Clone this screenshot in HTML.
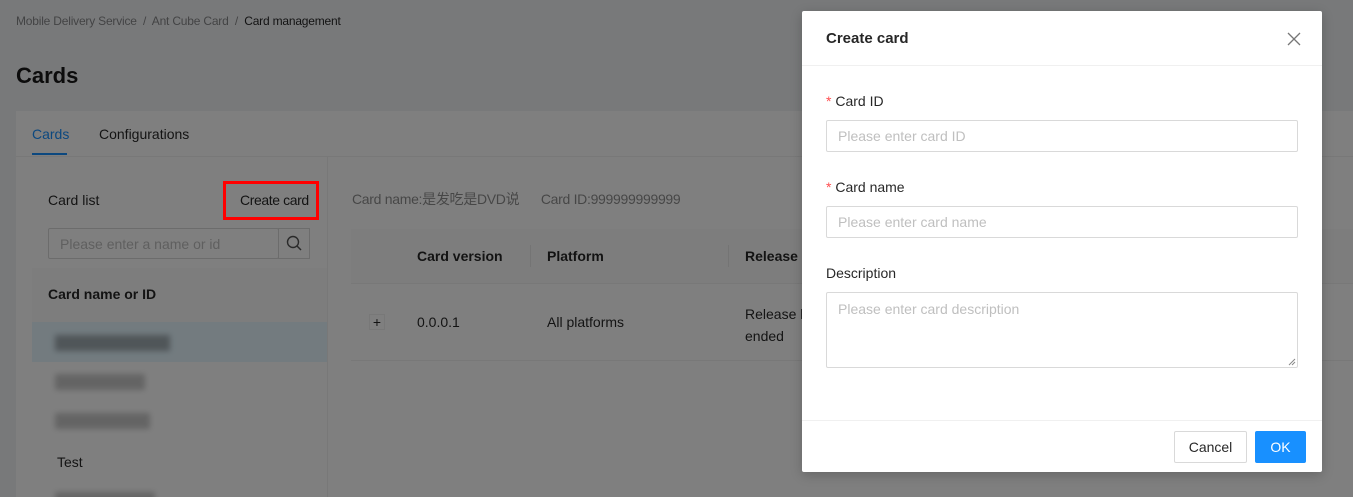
<!DOCTYPE html>
<html><head><meta charset="utf-8"><style>
*{box-sizing:border-box;margin:0;padding:0}
html,body{width:1353px;height:497px;overflow:hidden}
body{background:#f0f2f5;font-family:"Liberation Sans","Noto Sans CJK SC",sans-serif;font-size:14px;color:rgba(0,0,0,.85);position:relative}
.a{position:absolute}
.mask{position:absolute;left:0;top:0;width:1353px;height:497px;background:rgba(0,0,0,.5)}
.inp{position:absolute;border:1px solid #d9d9d9;border-radius:2px;background:#fff;color:#bfbfbf;padding:0 11px;line-height:30px;font-size:14px}
.blur{position:absolute;height:16px;background:rgba(0,0,0,.3);filter:blur(3px)}
</style></head><body>
<div class="a" style="left:16px;top:14px;font-size:12px;color:rgba(0,0,0,.45);letter-spacing:-0.2px">Mobile Delivery Service &nbsp;/&nbsp; Ant Cube Card &nbsp;/&nbsp; <span style="color:rgba(0,0,0,.85)">Card management</span></div>
<div class="a" style="left:16px;top:63px;font-size:22px;font-weight:bold;color:rgba(0,0,0,.9)">Cards</div>
<div class="a" style="left:16px;top:111px;width:1337px;height:386px;background:#fff"></div>
<div class="a" style="left:32px;top:126px;color:#1890ff">Cards</div>
<div class="a" style="left:32px;top:153px;width:35px;height:2px;background:#1890ff"></div>
<div class="a" style="left:99px;top:126px">Configurations</div>
<div class="a" style="left:16px;top:156px;width:1337px;height:1px;background:#f0f0f0"></div>
<div class="a" style="left:327px;top:157px;width:1px;height:340px;background:#f0f0f0"></div>
<div class="a" style="left:48px;top:192px">Card list</div>
<div class="a" style="left:240px;top:192px;letter-spacing:-0.4px">Create card</div>
<div class="inp" style="left:48px;top:228px;width:231px;height:31px">Please enter a name or id</div>
<div class="a" style="left:278px;top:228px;width:32px;height:31px;border:1px solid #d9d9d9;background:#fff"><svg width="30" height="29" viewBox="0 0 30 29"><circle cx="14" cy="13" r="5.5" fill="none" stroke="#555" stroke-width="1.4"/><path d="M18 17l4 4" stroke="#555" stroke-width="1.5"/></svg></div>
<div class="a" style="left:32px;top:268px;width:295px;height:54px;background:#fafafa"></div>
<div class="a" style="left:48px;top:286px;font-weight:bold">Card name or ID</div>
<div class="a" style="left:32px;top:322px;width:295px;height:40px;background:#e6f7ff"></div>
<div class="blur" style="left:55px;top:335px;width:115px"></div>
<div class="blur" style="left:55px;top:374px;width:90px;opacity:.7"></div>
<div class="blur" style="left:55px;top:413px;width:95px;opacity:.7"></div>
<div class="a" style="left:57px;top:454px">Test</div>
<div class="blur" style="left:55px;top:492px;width:100px;opacity:.7"></div>
<div class="a" style="left:352px;top:189px;color:rgba(0,0,0,.45);letter-spacing:-0.3px">Card name:是发吃是DVD说 &nbsp;&nbsp;&nbsp;&nbsp; Card ID:999999999999</div>
<div class="a" style="left:351px;top:229px;width:1002px;height:55px;background:#fafafa;border-bottom:1px solid #f0f0f0"></div>
<div class="a" style="left:417px;top:248px;font-weight:bold">Card version</div>
<div class="a" style="left:530px;top:245px;width:1px;height:22px;background:#e8e8e8"></div>
<div class="a" style="left:547px;top:248px;font-weight:bold">Platform</div>
<div class="a" style="left:728px;top:245px;width:1px;height:22px;background:#e8e8e8"></div>
<div class="a" style="left:745px;top:248px;font-weight:bold">Release s</div>
<div class="a" style="left:369px;top:314px;width:16px;height:16px;border:1px solid #f0f0f0;text-align:center;line-height:14px">+</div>
<div class="a" style="left:417px;top:314px">0.0.0.1</div>
<div class="a" style="left:547px;top:314px">All platforms</div>
<div class="a" style="left:745px;top:303px;line-height:22px">Release h<br>ended</div>
<div class="a" style="left:351px;top:360px;width:1002px;height:1px;background:#f0f0f0"></div>
<div class="mask"></div>
<div class="a" style="left:223px;top:181px;width:96px;height:39px;border:3px solid #ff0000"></div>
<div class="a" style="left:802px;top:11px;width:520px;height:461px;background:#fff;border-radius:2px;box-shadow:0 3px 12px rgba(0,0,0,.2)">
<div class="a" style="left:24px;top:19px;font-size:15px;font-weight:bold">Create card</div>
<svg class="a" style="left:484px;top:20px" width="16" height="16" viewBox="0 0 16 16"><path d="M2 2L14 14M14 2L2 14" stroke="#777" stroke-width="1.3"/></svg>
<div class="a" style="left:0;top:54px;width:520px;height:1px;background:#f0f0f0"></div>
<div class="a" style="left:24px;top:82px"><span style="color:#ff4d4f">*</span> Card ID</div>
<div class="inp" style="left:24px;top:109px;width:472px;height:32px">Please enter card ID</div>
<div class="a" style="left:24px;top:168px"><span style="color:#ff4d4f">*</span> Card name</div>
<div class="inp" style="left:24px;top:195px;width:472px;height:32px">Please enter card name</div>
<div class="a" style="left:24px;top:254px">Description</div>
<div class="inp" style="left:24px;top:281px;width:472px;height:76px;line-height:32px">Please enter card description</div>
<svg class="a" style="left:486px;top:347px" width="8" height="8"><path d="M1 7L7 1M4 7L7 4" stroke="#888"/></svg>
<div class="a" style="left:0;top:409px;width:520px;height:1px;background:#f0f0f0"></div>
<div class="a" style="left:372px;top:420px;width:73px;height:32px;border:1px solid #d9d9d9;border-radius:2px;text-align:center;line-height:30px">Cancel</div>
<div class="a" style="left:453px;top:420px;width:51px;height:32px;background:#1890ff;border-radius:2px;color:#fff;text-align:center;line-height:32px">OK</div>
</div>
</body></html>
